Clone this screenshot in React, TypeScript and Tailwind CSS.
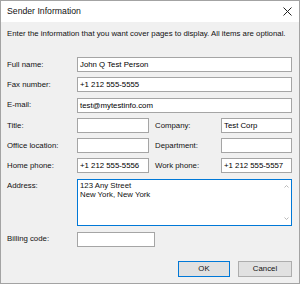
import React from 'react';

const inputCls =
  'h-[15px] border border-[#a5a5a5] bg-white px-[2px] leading-[13px] text-black whitespace-nowrap overflow-hidden';

function Row({ label, value }: { label: string; value?: string }) {
  return (
    <div className="flex items-center">
      <div className="w-[70px] shrink-0">{label}</div>
      <div className={`${inputCls} flex-1`}>{value}</div>
    </div>
  );
}

function PairRow({
  left,
  leftValue,
  right,
  rightValue,
}: {
  left: string;
  leftValue?: string;
  right: string;
  rightValue?: string;
}) {
  return (
    <div className="flex items-center">
      <div className="w-[70px] shrink-0">{left}</div>
      <div className={`${inputCls} w-[72px]`}>{leftValue}</div>
      <div className="w-[72px] pl-[6px] shrink-0">{right}</div>
      <div className={`${inputCls} flex-1`}>{rightValue}</div>
    </div>
  );
}

export default function App() {
  return (
    <div className="w-[300px] h-[284px] border border-[#a3a3a3] bg-[#f0f0f0] flex flex-col font-['Liberation_Sans',Arial,sans-serif] text-[7.8px] text-[#111]">
      {/* Title bar */}
      <div className="h-[21px] bg-white flex items-center justify-between pl-[6px] pr-[8px] shrink-0">
        <span className="text-[8.7px]">Sender Information</span>
        <svg width="9" height="9" viewBox="0 0 9 9" className="mr-[-1px]">
          <path d="M0.5 0.5 L8.5 8.5 M8.5 0.5 L0.5 8.5" stroke="#222" strokeWidth="1" fill="none" />
        </svg>
      </div>

      <div className="flex flex-col pl-[6px] pr-[7px]">
        <p className="mt-[7px] leading-[10px] whitespace-nowrap">
          Enter the information that you want cover pages to display. All items are optional.
        </p>

        <div className="mt-[18px] flex flex-col gap-[5.3px]">
          <Row label="Full name:" value="John Q Test Person" />
          <Row label="Fax number:" value="+1 212 555-5555" />
          <Row label="E-mail:" value="test@mytestinfo.com" />
          <PairRow left="Title:" right="Company:" rightValue="Test Corp" />
          <PairRow left="Office location:" right="Department:" />
          <PairRow left="Home phone:" leftValue="+1 212 555-5556" right="Work phone:" rightValue="+1 212 555-5557" />

          <div className="flex items-start">
            <div className="w-[70px] shrink-0 pt-[1px]">Address:</div>
            <div className="flex-1 h-[47px] border border-[#0078d7] bg-white flex">
              <div className="flex-1 px-[2px] pt-[1px] leading-[9px]">
                <div>123 Any Street</div>
                <div>New York, New York</div>
              </div>
              <div className="w-[9px] flex flex-col items-center justify-between py-[5px]">
                <svg width="5" height="3" viewBox="0 0 5 3">
                  <path d="M0.5 2.5 L2.5 0.5 L4.5 2.5" stroke="#b0b0b0" fill="none" strokeWidth="0.9" />
                </svg>
                <svg width="5" height="3" viewBox="0 0 5 3">
                  <path d="M0.5 0.5 L2.5 2.5 L4.5 0.5" stroke="#b0b0b0" fill="none" strokeWidth="0.9" />
                </svg>
              </div>
            </div>
          </div>
        </div>

        <div className="mt-[6px] flex items-center">
          <div className="w-[70px] shrink-0">Billing code:</div>
          <div className={`${inputCls} w-[78px]`}></div>
        </div>

        <div className="mt-[14px] flex justify-end gap-[8px]">
          <button className="w-[52px] h-[16px] border border-[#0078d7] bg-[#e1e1e1] leading-[14px]">
            OK
          </button>
          <button className="w-[54px] h-[16px] border border-[#adadad] bg-[#e1e1e1] leading-[14px]">
            Cancel
          </button>
        </div>
      </div>
    </div>
  );
}
